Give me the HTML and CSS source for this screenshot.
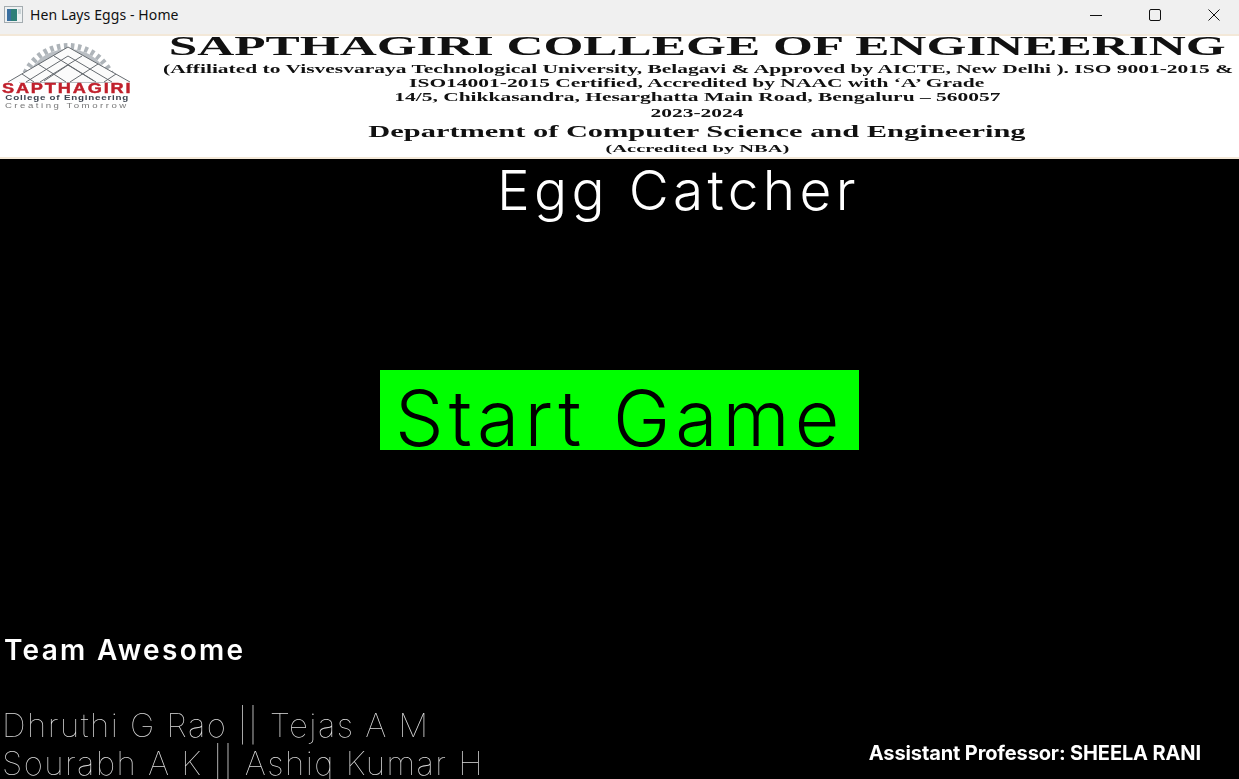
FILE: index.html
```html
<!DOCTYPE html>
<html lang="en">
  <head>
    <meta charset="UTF-8" />
    <meta name="viewport" content="width=device-width, initial-scale=1.0" />
    <title>Hen Lays Eggs - Home</title>
    <link rel="stylesheet" href="styles.css">
  </head>
  <body>
    <header class="titlebar">
      <svg class="appicon" width="20" height="18" viewBox="0 0 20 18">
        <rect x="0.5" y="0.5" width="18" height="16" fill="#eef1f2" stroke="#a4acb0" />
        <rect x="3" y="3" width="10" height="12" fill="#2f7f78" />
        <rect x="3" y="3" width="4" height="12" fill="#3a6fa0" />
        <rect x="14" y="3" width="3" height="5" fill="#c9d3d6" />
      </svg>
      <span class="wintitle">Hen Lays Eggs - Home</span>
      <div class="controls">
        <svg class="ctl" width="12" height="12" viewBox="0 0 12 12"><path d="M0 6.5H12" stroke="#111" fill="none" /></svg>
        <svg class="ctl" width="12" height="12" viewBox="0 0 12 12"><rect x="0.5" y="0.5" width="11" height="11" rx="1.5" stroke="#111" fill="none" /></svg>
        <svg class="ctl" width="12" height="12" viewBox="0 0 12 12"><path d="M0.5 0.5L11.5 11.5M11.5 0.5L0.5 11.5" stroke="#111" fill="none" /></svg>
      </div>
    </header>

    <section class="banner">
      <div class="logo">
        <svg class="roof" width="134" height="40" viewBox="0 0 134 40">
          <circle cx="68" cy="50" r="44" fill="#b9bec3" />
          <circle cx="68" cy="50" r="47" fill="none" stroke="#aeb4b9" stroke-width="6" stroke-dasharray="3.5 3.5" />
          <path d="M8 39L68 4L130 39Z" fill="#fbfbfb" />
          <path d="M8 39L68 4L130 39M26 39L68 13L112 39M44 38L68 22L94 38M22 31L34 39M38 21L66 39M54 13L96 39M116 31L104 39M98 21L70 39M82 13L40 39" fill="none" stroke="#666b70" stroke-width="1" />
        </svg>
        <span class="logo-name">SAPTHAGIRI</span>
        <span class="logo-sub">College of Engineering</span>
        <span class="logo-tag">Creating Tomorrow</span>
      </div>
      <div class="letterhead">
        <p class="lh lh-name"><span>SAPTHAGIRI COLLEGE OF ENGINEERING</span></p>
        <p class="lh lh-aff"><span>(Affiliated to Visvesvaraya Technological University, Belagavi &amp; Approved by AICTE, New Delhi ). ISO 9001-2015 &amp;</span></p>
        <p class="lh lh-iso"><span>ISO14001-2015 Certified, Accredited by NAAC with ‘A’ Grade</span></p>
        <p class="lh lh-addr"><span>14/5, Chikkasandra, Hesarghatta Main Road, Bengaluru – 560057</span></p>
        <p class="lh lh-year"><span>2023-2024</span></p>
        <p class="lh lh-dept"><span>Department of Computer Science and Engineering</span></p>
        <p class="lh lh-nba"><span>(Accredited by NBA)</span></p>
      </div>
    </section>

    <main class="game">
      <h1 class="game-title">Egg Catcher</h1>
      <div class="start-btn">Start Game</div>
      <footer class="credits">
        <div class="team">
          <h2 class="team-name">Team Awesome</h2>
          <p class="member">Dhruthi G Rao || Tejas A M</p>
          <p class="member">Sourabh A K || Ashiq Kumar H</p>
        </div>
        <p class="guide">Assistant Professor: SHEELA RANI</p>
      </footer>
    </main>
  </body>
</html>
```

FILE: styles.css
```css
html,
body {
  margin: 0;
  height: 100%;
  overflow: hidden;
}
body {
  display: flex;
  flex-direction: column;
  background: #000;
}

.titlebar {
  display: flex;
  align-items: center;
  height: 30px;
  padding: 0 0 4px 4px;
  background: #f0f0f0;
  flex: none;
}
.appicon {
  margin-right: 6px;
}
.wintitle {
  margin-top: -2px;
  font: 14px "Noto Sans", sans-serif;
  letter-spacing: 0.1px;
  color: #111;
}
.controls {
  display: flex;
  gap: 47px;
  margin-left: auto;
  padding-right: 19px;
}
.ctl {
  display: block;
}

.banner {
  display: flex;
  height: 121px;
  flex: none;
  background: #fff;
  border-top: 2px solid #f3e8d8;
  border-bottom: 2px solid #f3e8d8;
}
.logo {
  flex: none;
  display: flex;
  flex-direction: column;
  align-items: center;
  width: 134px;
  margin-right: 21px;
  padding-top: 7px;
  filter: blur(0.6px);
}
.roof {
  display: block;
  flex: none;
}
.logo-name {
  font: 700 14px/11px "Liberation Sans", sans-serif;
  letter-spacing: 1.4px;
  -webkit-text-stroke: 0.4px #c0202c;
  color: #c0202c;
  transform: scaleX(1.3);
}
.logo-sub {
  font: 700 7px/8px "Liberation Sans", sans-serif;
  letter-spacing: 0.55px;
  color: #3c4450;
  transform: scaleX(1.4);
}
.logo-tag {
  font: 6.5px/7px "Liberation Sans", sans-serif;
  letter-spacing: 1.7px;
  color: #777;
  transform: scaleX(1.48);
}

.letterhead {
  flex: 1;
  min-width: 0;
  font-family: "Liberation Serif", serif;
  font-weight: 700;
  color: #111;
  filter: blur(0.6px);
}
.lh {
  margin: 0;
  text-align: center;
  white-space: nowrap;
}
.lh span {
  display: inline-block;
  transform: scaleX(1.79);
}
.lh-name {
  height: 21px;
  font-size: 27px;
  line-height: 21px;
}
.lh-name span {
  transform: scaleX(1.9);
}
.lh-aff {
  height: 18px;
  font-size: 12px;
  line-height: 24px;
  text-align: left;
  padding-left: 8px;
}
.lh-aff span {
  transform-origin: left center;
}
.lh-iso {
  height: 15px;
  font-size: 12px;
  line-height: 17px;
}
.lh-addr {
  height: 14px;
  font-size: 12px;
  line-height: 15px;
}
.lh-year {
  height: 17px;
  font-size: 12px;
  line-height: 19px;
}
.lh-dept {
  height: 17px;
  font-size: 16px;
  line-height: 21px;
}
.lh-dept span {
  transform: scaleX(1.9);
}
.lh-nba {
  height: 18px;
  font-size: 11px;
  line-height: 20px;
}
.lh-nba span {
  transform: scaleX(1.86);
}

.game {
  flex: 1;
  min-height: 0;
  display: flex;
  flex-direction: column;
  background: #000;
  font-family: Inter, sans-serif;
}
.game-title {
  margin: 1px 0 0;
  padding-left: 497px;
  font-size: 55px;
  font-weight: 300;
  line-height: 60px;
  letter-spacing: 4.3px;
  color: #fff;
  white-space: nowrap;
  filter: grayscale(1);
}
.start-btn {
  align-self: center;
  width: 479px;
  height: 80px;
  margin-top: 150px;
  padding: 8px 0 0 15px;
  box-sizing: border-box;
  background: #0f0;
  color: #000;
  font-size: 77px;
  font-weight: 300;
  line-height: 80px;
  letter-spacing: 5px;
  white-space: nowrap;
}
.credits {
  display: flex;
  justify-content: space-between;
  align-items: flex-end;
  margin-top: auto;
  height: 147px;
  padding: 0 38px 0 2px;
}
.team {
  height: 147px;
}
.team-name {
  margin: 0 0 38px 2px;
  font-size: 28px;
  font-weight: 600;
  line-height: 36px;
  letter-spacing: 2.3px;
  color: #fff;
  filter: grayscale(1);
}
.member {
  margin: 0;
  font-size: 33px;
  font-weight: 100;
  line-height: 38px;
  letter-spacing: 1.45px;
  color: #ddd;
  white-space: nowrap;
  filter: grayscale(1);
}
.guide {
  margin: 0 0 14px;
  font-size: 20px;
  font-weight: 700;
  line-height: 24px;
  letter-spacing: -0.12px;
  color: #fff;
  white-space: nowrap;
  filter: grayscale(1) blur(0.3px);
}
```
